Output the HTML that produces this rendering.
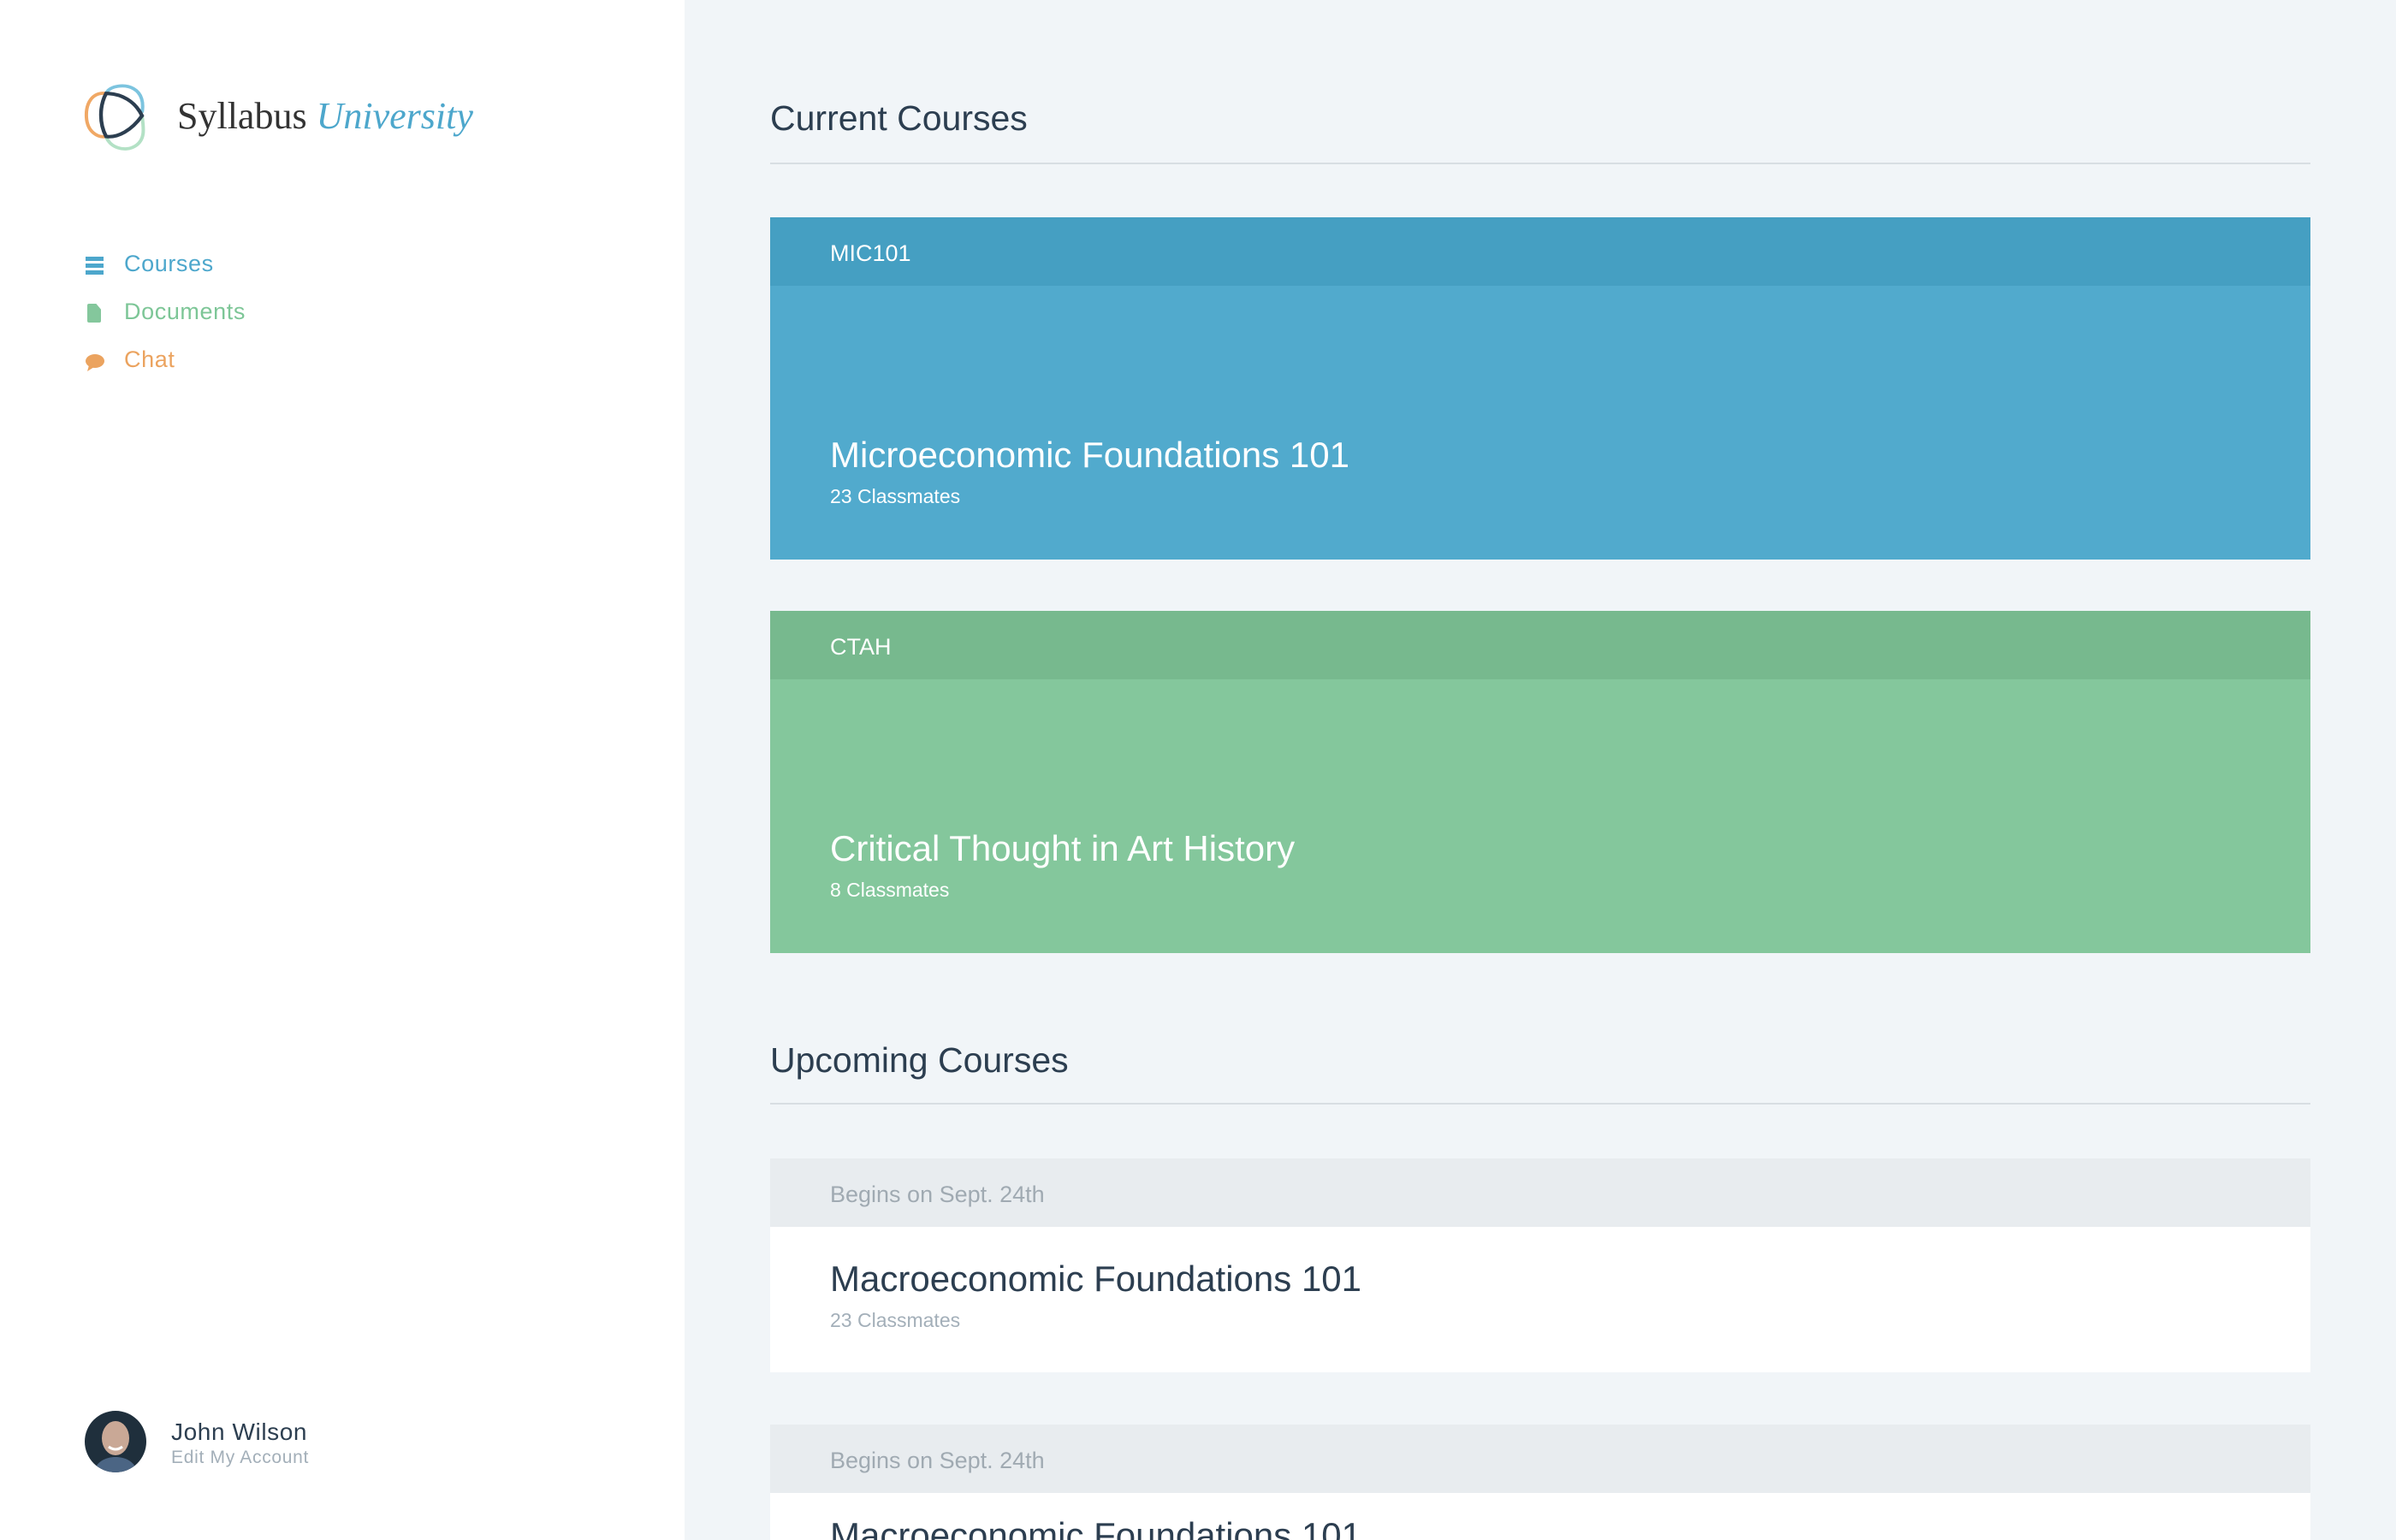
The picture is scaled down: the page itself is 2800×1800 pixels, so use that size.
<!DOCTYPE html>
<html style="width:2800px;height:1800px;overflow:hidden"><head><meta charset="utf-8"><style>
*{margin:0;padding:0;box-sizing:border-box}
body{width:2800px;height:1800px;overflow:hidden;background:#f1f5f8;font-family:"Liberation Sans",sans-serif;position:relative;color:#2c3e50}
.side{position:absolute;left:0;top:0;width:800px;height:1800px;background:#fff}
.abs{position:absolute;white-space:nowrap}
.h{font-size:41px;left:900px}
.line{position:absolute;left:900px;width:1800px;height:2px;background:#d8dee3}
.card{position:absolute;left:900px;width:1800px;overflow:hidden}
.hd{height:80px;font-size:27px;padding-left:70px;line-height:84px}
.t{position:absolute;left:70px;font-size:42px}
.s{position:absolute;left:70px;font-size:23px}
.nav{position:absolute;left:145px;font-size:27px;letter-spacing:.6px}
</style></head><body>
<div class="side">
<svg class="abs" style="left:98px;top:98px" width="80" height="82" viewBox="0 0 40 44" preserveAspectRatio="none">
<path d="M13 6 C5 5 1 12 1.5 21 C2 30 8 34 13 33" fill="none" stroke="#f0a865" stroke-width="2"/>
<path d="M13 6 C15 1 24 0 29 3 C34 6 35 12 34 18" fill="none" stroke="#7cc4df" stroke-width="2"/>
<path d="M13 33 C15 40 24 43 30 39 C36 35 35 28 34 20" fill="none" stroke="#b3e1c5" stroke-width="2"/>
<path d="M13 6 C22 6 30 11 34 20 C28 29 20 34 13 33 C9 25 9 14 13 6Z" fill="none" stroke="#2c3e50" stroke-width="2.2"/>
</svg>
<div class="abs" style="left:207px;top:110px;font-family:'Liberation Serif',serif;font-size:44px;color:#333">Syllabus <i style="color:#4da7cc">University</i></div>
<div class="abs" style="left:100px;top:300px;width:21px;height:21px;background:linear-gradient(#4da7cc 0 5px,transparent 5px 8px,#4da7cc 8px 13px,transparent 13px 16px,#4da7cc 16px)"></div>
<div class="nav" style="top:293px;color:#4da7cc">Courses</div>
<div class="abs" style="left:102px;top:355px;width:16px;height:22px;background:#84c79c;border-radius:2px;clip-path:polygon(0 0,65% 0,100% 30%,100% 100%,0 100%)"></div>
<div class="nav" style="top:349px;color:#7dc697">Documents</div>
<svg class="abs" style="left:99px;top:412px" width="24" height="24" viewBox="0 0 24 24"><ellipse cx="12" cy="10" rx="11" ry="8" fill="#eba35f"/><path d="M5 15 L3 22 L11 17Z" fill="#eba35f"/></svg>
<div class="nav" style="top:405px;color:#eba35f">Chat</div>
<svg class="abs" style="left:99px;top:1649px" width="72" height="72" viewBox="0 0 72 72"><defs><clipPath id="c"><circle cx="36" cy="36" r="36"/></clipPath></defs><g clip-path="url(#c)"><rect width="72" height="72" fill="#1f2f3c"/><ellipse cx="36" cy="32" rx="16" ry="20" fill="#c9a896"/><path d="M10 72 C14 58 26 54 36 54 C46 54 58 58 62 72Z" fill="#4b6584"/><path d="M28 42 Q36 48 44 42" stroke="#fff" stroke-width="3" fill="none"/></g></svg>
<div class="abs" style="left:200px;top:1658px;font-size:28px;letter-spacing:.6px;color:#2c3e50">John Wilson</div>
<div class="abs" style="left:200px;top:1692px;font-size:21px;letter-spacing:.7px;color:#a3afb9">Edit My Account</div>
</div>

<div class="abs h" style="top:115px">Current Courses</div>
<div class="line" style="top:190px"></div>
<div class="card" style="top:254px;height:400px;background:#51aacd;color:#fff"><div class="hd" style="background:#459fc2">MIC101</div><div class="t" style="top:254px">Microeconomic Foundations 101</div><div class="s" style="top:313px">23 Classmates</div></div>
<div class="card" style="top:714px;height:400px;background:#84c79c;color:#fff"><div class="hd" style="background:#77b98e">CTAH</div><div class="t" style="top:254px">Critical Thought in Art History</div><div class="s" style="top:313px">8 Classmates</div></div>

<div class="abs h" style="top:1216px">Upcoming Courses</div>
<div class="line" style="top:1289px"></div>
<div class="card" style="top:1354px;height:250px;background:#fff"><div class="hd" style="background:#e8ecef;color:#a0aab2">Begins on Sept. 24th</div><div class="t" style="top:117px">Macroeconomic Foundations 101</div><div class="s" style="top:176px;color:#a3afb9">23 Classmates</div></div>
<div class="card" style="top:1665px;height:135px;background:#fff"><div class="hd" style="background:#e8ecef;color:#a0aab2">Begins on Sept. 24th</div><div class="t" style="top:106px">Macroeconomic Foundations 101</div></div>
</body></html>
